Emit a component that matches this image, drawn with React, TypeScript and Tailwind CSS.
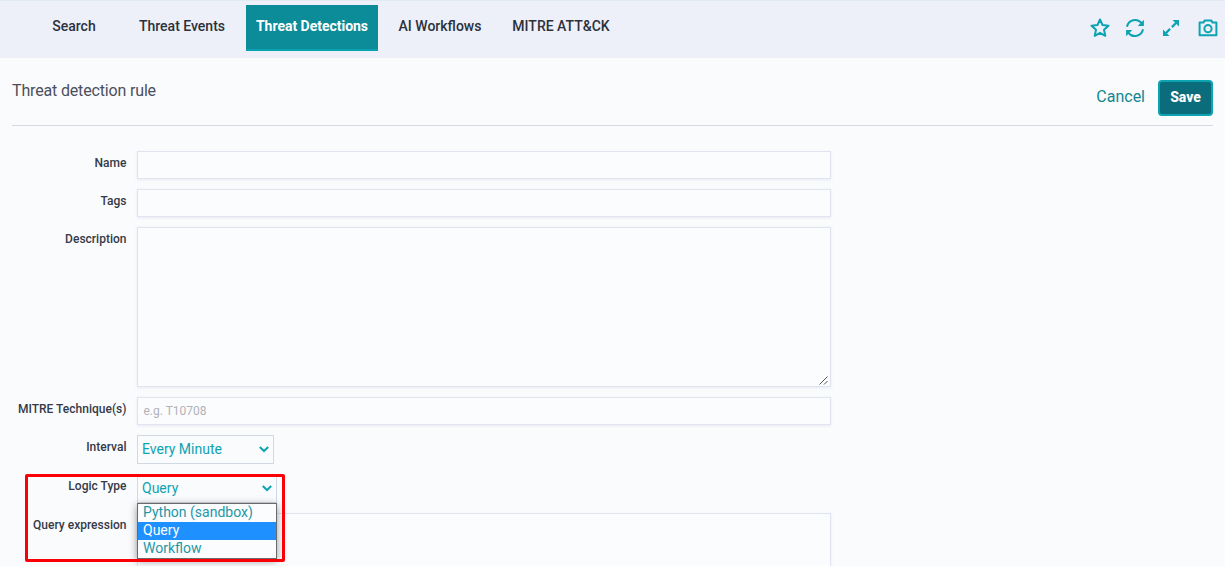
import type { ReactNode } from "react";

const tabs = [
  { label: "Search", box: "w-[64px] mr-[23px]" },
  { label: "Threat Events", box: "w-[106px] mr-[11px]" },
  { label: "Threat Detections", box: "w-[132px] mr-[10px]", active: true },
  { label: "AI Workflows", box: "w-[104px] mr-[10px]" },
  { label: "MITRE ATT&CK", box: "w-[118px]" },
];

const logicTypes = ["Python (sandbox)", "Query", "Workflow"];

function Star() {
  return (
    <svg width="20" height="20" viewBox="0 0 20 20" fill="none" stroke="currentColor" strokeWidth="2" strokeLinejoin="round">
      <path d="M10 1.5 12.5 7 18.5 7.7 14 11.8 15.3 17.8 10 14.8 4.7 17.8 6 11.8 1.5 7.7 7.5 7Z" />
    </svg>
  );
}

function Refresh() {
  return (
    <svg width="20" height="20" viewBox="0 0 20 20" fill="none" stroke="currentColor" strokeWidth="2">
      <path d="M2 8.7A8.2 8.2 0 0 1 16.6 5.2M18 11.3A8.2 8.2 0 0 1 3.4 14.8" />
      <path d="M18.9 1.8V8H12.7ZM1.1 18.2V12H7.3Z" fill="currentColor" stroke="none" />
    </svg>
  );
}

function Expand() {
  return (
    <svg width="18" height="18" viewBox="0 0 18 18" fill="none" stroke="currentColor" strokeWidth="2.2">
      <path d="M14 4 9.9 8.1M8.1 9.9 4 14" />
      <path d="M10.5 1H17V7.5ZM1 10.5V17H7.5Z" fill="currentColor" stroke="none" />
    </svg>
  );
}

function Camera() {
  return (
    <svg width="20" height="18" viewBox="0 0 20 18" fill="none" stroke="currentColor" strokeWidth="2" strokeLinejoin="round">
      <path d="M1.6 3.6H5.4L6.8 1.4H13.2L14.6 3.6H18.4V16.2H1.6Z" />
      <circle cx="10" cy="9.7" r="3.6" />
    </svg>
  );
}

function Chevron() {
  return (
    <svg width="10" height="7" viewBox="0 0 10 7" fill="none" stroke="#0da3b2" strokeWidth="2">
      <path d="M0.8 1 5 5 9.2 1" />
    </svg>
  );
}

function Row({ label, children }: { label: string; children: ReactNode }) {
  return (
    <div className="flex items-start gap-[10.5px]">
      <label className="w-[126.5px] shrink-0 pt-[4px] text-right text-[12px] leading-4 font-medium tracking-[0.01px] text-[#343a48]">{label}</label>
      {children}
    </div>
  );
}

const field = "w-[694px] border border-[#e0e4f0] bg-[#fbfcfe] shadow-[0_1px_3px_rgba(60,70,120,0.09)]";

export default function App() {
  return (
    <div className="relative h-[566px] w-[1225px] overflow-hidden bg-[#fafbfd] font-['Roboto',sans-serif]">
      <header className="flex h-[58px] items-start justify-between border-t border-[#e1eaf2] bg-[#edf0f8] pt-1">
        <nav className="flex pl-[42px]">
          {tabs.map((t) => (
            <a
              key={t.label}
              className={`flex h-[46px] justify-center border-b-2 pt-[11px] text-[14px] leading-5 whitespace-nowrap ${t.box} ${
                t.active ? "border-[#0aa2b0] bg-[#0c8b99] font-bold text-white tracking-[-0.02px]" : "border-transparent font-medium text-[#2c313c]"
              }`}
            >
              {t.label}
            </a>
          ))}
        </nav>
        <div className="flex h-[46px] items-center pr-[7px] text-[#0da3b2]">
          <span className="mr-[15px]"><Star /></span>
          <span className="mr-[17px]"><Refresh /></span>
          <span className="mr-[18px]"><Expand /></span>
          <Camera />
        </div>
      </header>

      <section className="mx-3 flex h-[68px] items-start justify-between border-b border-[#d5d9e6]">
        <h1 className="pt-[21px] text-[16px] leading-6 font-normal tracking-[-0.16px] text-[#4b4f5c]">Threat detection rule</h1>
        <div className="flex items-center gap-[13px] pt-[22px]">
          <button className="pb-[3px] text-[16px] leading-6 text-[#128592]">Cancel</button>
          <button className="h-9 w-[55px] rounded-[4px] border-2 border-[#0da3b2] bg-[#0b6d7b] pb-[1px] text-[14px] font-extrabold text-white">Save</button>
        </div>
      </section>

      <main className="flex flex-col gap-[10px] pt-[25px]">
        <Row label="Name"><div className={`h-7 ${field}`} /></Row>
        <Row label="Tags"><div className={`h-7 ${field}`} /></Row>
        <Row label="Description">
          <div className={`flex h-40 items-end justify-end pr-px ${field}`}>
            <svg width="10" height="10" viewBox="0 0 10 10" stroke="#555" strokeWidth="1" fill="none">
              <path d="M0.5 8.5 8.5 0.5M5 8.5 8.5 5" />
            </svg>
          </div>
        </Row>
        <Row label="MITRE Technique(s)">
          <div className={`flex h-7 items-center pl-[5.5px] text-[12px] text-[#b0b2b8] ${field}`}>e.g. T10708</div>
        </Row>
        <Row label="Interval">
          <div className="flex h-[29px] w-[137px] items-center justify-between border border-[#d3d8e5] pr-1 pl-[4px] text-[14px] text-[#0da3b2]">
            Every Minute <Chevron />
          </div>
        </Row>
        <Row label="Logic Type">
          <div className="relative">
            <div className="flex h-[29px] w-[140px] items-center justify-between border border-[#d3d8e5] pr-1 pl-[4px] text-[14px] text-[#0da3b2]">
              Query <Chevron />
            </div>
            <div className="absolute top-[29px] left-0 z-10 w-[140px] border border-[#686a6d] bg-[#fbfcfe] text-[14px] leading-4 shadow-[0_2px_8px_rgba(0,0,0,0.4)]">
              {logicTypes.map((type) => (
                <div key={type} className={`h-[18px] pl-[5px] ${type === "Query" ? "bg-[#1e90ff] text-white" : "text-[#2397a6]"}`}>
                  {type}
                </div>
              ))}
            </div>
          </div>
        </Row>
        <Row label="Query expression"><div className={`h-40 ${field}`} /></Row>
      </main>

      <div className="absolute top-[474px] left-[25px] z-20 h-[88px] w-[260px] rounded-[2px] border-3 border-[#fb0007]" />
    </div>
  );
}
